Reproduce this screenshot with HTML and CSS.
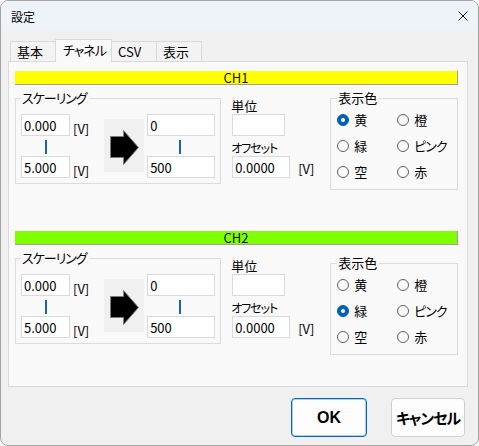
FILE: index.html
```html
<!DOCTYPE html>
<html lang="ja">
<head>
<meta charset="utf-8">
<title>設定</title>
<link rel="stylesheet" href="styles.css">
</head>
<body>
<div class="window">
  <div class="titlebar">
    <span class="title">設定</span>
    <svg class="close" width="10" height="10" viewBox="0 0 10 10"><path d="M0.5 0.5L9.5 9.5M9.5 0.5L0.5 9.5" stroke="#1a1a1a" stroke-width="1" fill="none"/></svg>
  </div>
  <div class="main">
    <div class="tabs">
      <div class="tab">基本</div>
      <div class="tab tab--active"><span class="kana">チャネル</span></div>
      <div class="tab">CSV</div>
      <div class="tab">表示</div>
    </div>
    <div class="panel">
      <section class="channel">
        <div class="ch-bar ch-bar--yellow">CH1</div>
        <div class="ch-row">
          <fieldset class="scaling">
            <legend><span class="kana">スケーリング</span></legend>
            <div class="scaling-body">
              <div class="range range--in">
                <div class="range-row"><input class="field field--in" value="0.000"><span class="unit">[V]</span></div>
                <span class="link"></span>
                <div class="range-row"><input class="field field--in" value="5.000"><span class="unit">[V]</span></div>
              </div>
              <div class="arrow-box">
                <svg width="30" height="36" viewBox="0 0 30 36"><polygon points="0.5,6.5 13.5,6.5 13.5,0.5 28.5,17.5 13.5,34.5 13.5,27.5 0.5,27.5" fill="#000" stroke="#7c7c7c" stroke-width="1"/></svg>
              </div>
              <div class="range range--out">
                <input class="field field--out" value="0">
                <span class="link"></span>
                <input class="field field--out" value="500">
              </div>
            </div>
          </fieldset>
          <div class="units">
            <span class="label label--first">単位</span>
            <input class="field field--unit" value="">
            <span class="label label--second"><span class="kana">オフセット</span></span>
            <div class="offset-row"><input class="field field--offset" value="0.0000"><span class="unit unit--offset">[V]</span></div>
          </div>
          <fieldset class="colors">
            <legend>表示色</legend>
            <div class="radio-grid">
              <div class="radio-item"><span class="radio radio--on"></span>黄</div>
              <div class="radio-item"><span class="radio"></span>橙</div>
              <div class="radio-item"><span class="radio"></span>緑</div>
              <div class="radio-item"><span class="radio"></span><span class="kana">ピンク</span></div>
              <div class="radio-item"><span class="radio"></span>空</div>
              <div class="radio-item"><span class="radio"></span>赤</div>
            </div>
          </fieldset>
        </div>
      </section>
      <section class="channel">
        <div class="ch-bar ch-bar--green">CH2</div>
        <div class="ch-row">
          <fieldset class="scaling">
            <legend><span class="kana">スケーリング</span></legend>
            <div class="scaling-body">
              <div class="range range--in">
                <div class="range-row"><input class="field field--in" value="0.000"><span class="unit">[V]</span></div>
                <span class="link"></span>
                <div class="range-row"><input class="field field--in" value="5.000"><span class="unit">[V]</span></div>
              </div>
              <div class="arrow-box">
                <svg width="30" height="36" viewBox="0 0 30 36"><polygon points="0.5,6.5 13.5,6.5 13.5,0.5 28.5,17.5 13.5,34.5 13.5,27.5 0.5,27.5" fill="#000" stroke="#7c7c7c" stroke-width="1"/></svg>
              </div>
              <div class="range range--out">
                <input class="field field--out" value="0">
                <span class="link"></span>
                <input class="field field--out" value="500">
              </div>
            </div>
          </fieldset>
          <div class="units">
            <span class="label label--first">単位</span>
            <input class="field field--unit" value="">
            <span class="label label--second"><span class="kana">オフセット</span></span>
            <div class="offset-row"><input class="field field--offset" value="0.0000"><span class="unit unit--offset">[V]</span></div>
          </div>
          <fieldset class="colors colors--low">
            <legend>表示色</legend>
            <div class="radio-grid">
              <div class="radio-item"><span class="radio"></span>黄</div>
              <div class="radio-item"><span class="radio"></span>橙</div>
              <div class="radio-item"><span class="radio radio--on"></span>緑</div>
              <div class="radio-item"><span class="radio"></span><span class="kana">ピンク</span></div>
              <div class="radio-item"><span class="radio"></span>空</div>
              <div class="radio-item"><span class="radio"></span>赤</div>
            </div>
          </fieldset>
        </div>
      </section>
    </div>
  </div>
  <div class="actions">
    <button class="btn btn--ok">OK</button>
    <button class="btn btn--cancel">キャンセル</button>
  </div>
</div>
</body>
</html>
```
FILE: styles.css
```css
html, body {
  margin: 0;
  background: #ffffff;
}
body {
  font-family: "Noto Sans CJK JP", "Noto Sans", sans-serif;
  font-size: 13px;
  color: #000;
  font-feature-settings: "palt";
}
.kana {
  font-size: 12px;
  letter-spacing: -1px;
}
.window {
  width: 479px;
  height: 446px;
  box-sizing: border-box;
  border: 1px solid #a3a3a3;
  border-radius: 8px;
  background: #f0f0f0;
  overflow: hidden;
  display: flex;
  flex-direction: column;
}
.titlebar {
  height: 30px;
  flex: none;
  background: #eef3fa;
  display: flex;
  align-items: center;
  justify-content: space-between;
  padding: 0 10px;
  font-size: 12px;
}
.close { display: block; }
.main {
  padding: 8px 10px 0 7px;
}
.tabs {
  display: flex;
  align-items: flex-end;
  height: 22px;
  padding-left: 2px;
}
.tab {
  box-sizing: border-box;
  width: 46px;
  height: 20px;
  padding-left: 6px;
  border: 1px solid #d9d9d9;
  border-bottom: none;
  background: #f3f3f3;
  display: flex;
  align-items: center;
  line-height: 14px;
}
.tab + .tab { margin-left: -1px; }
.tab--active {
  width: 57px;
  height: 23px;
  margin-bottom: -1px;
  padding-left: 7px;
  padding-bottom: 3px;
  background: #f9f9f9;
  position: relative;
  z-index: 1;
}
.tab--active .kana { font-size: 13px; }
.panel {
  box-sizing: border-box;
  width: 460px;
  height: 326px;
  border: 1px solid #d9d9d9;
  background: #f9f9f9;
  padding: 9px 9px 0 6px;
}
.channel + .channel { margin-top: 41px; }
.ch-bar {
  box-sizing: border-box;
  height: 14px;
  border-right: 1px solid #a0a0a0;
  border-bottom: 1px solid #a0a0a0;
  text-align: center;
  font-size: 13px;
  line-height: 13px;
  color: #111;
}
.ch-bar--yellow { background: #ffff00; }
.ch-bar--green { background: #80ff00; }
.ch-row {
  display: flex;
  align-items: flex-start;
  margin-top: 6px;
}
fieldset {
  margin: 0;
  min-width: 0;
  box-sizing: border-box;
  border: 1px solid #dcdcdc;
}
legend {
  padding: 0 2px 0 1px;
  font-size: 13px;
  line-height: 14px;
}
.scaling {
  width: 208px;
  padding: 9px 5px 5px 5px;
}
.scaling legend .kana { font-size: 13px; }
.scaling-body {
  display: flex;
  align-items: flex-start;
}
.range {
  display: flex;
  flex-direction: column;
  align-items: flex-start;
}
.range--in { width: 84px; }
.range--out { width: 68px; margin-left: 3px; }
.range-row {
  display: flex;
  align-items: flex-end;
  gap: 3px;
}
.link {
  display: block;
  width: 2px;
  height: 14px;
  background: #1f5fb0;
  margin: 4px 0 2px 24px;
}
.range--out .link { margin-left: 32px; }
.field {
  box-sizing: border-box;
  height: 22px;
  margin: 0;
  padding: 0 2px;
  border: 1px solid #dadada;
  background: #ffffff;
  font: inherit;
  color: #000;
  outline: none;
}
.field--in { width: 49px; }
.field--out { width: 68px; }
.field--unit { width: 53px; margin-top: 1px; margin-left: 1px; }
.field--offset { width: 58px; margin-left: 1px; }
.unit { line-height: 14px; }
.unit--offset { margin-bottom: 2px; }
.arrow-box {
  box-sizing: border-box;
  width: 40px;
  height: 53px;
  margin-top: 5px;
  background: #f0f0f0;
  padding: 11px 0 0 6px;
}
.arrow-box svg { display: block; }
.units {
  width: 100px;
  margin-left: 10px;
  display: flex;
  flex-direction: column;
  align-items: flex-start;
}
.label { line-height: 14px; }
.label--first { margin-top: 8px; }
.label--second { margin-top: 5px; margin-bottom: 1px; }
.offset-row {
  display: flex;
  align-items: flex-end;
  gap: 8px;
}
.colors {
  width: 129px;
  padding: 2px 0 4px 6px;
}
.colors--low { margin-top: 5px; }
.radio-grid {
  display: grid;
  grid-template-columns: 60px 60px;
  grid-auto-rows: 26px;
  align-items: center;
}
.radio-item {
  display: flex;
  align-items: center;
  gap: 5px;
  line-height: 14px;
}
.radio-item .kana { font-size: 13px; }
.radio {
  box-sizing: border-box;
  width: 12px;
  height: 12px;
  border-radius: 50%;
  border: 1px solid #5f5f5f;
  background: #fafafa;
  display: flex;
  align-items: center;
  justify-content: center;
  flex: none;
}
.radio--on {
  background: #005fb8;
  border-color: #005fb8;
}
.radio--on::after {
  content: "";
  width: 4px;
  height: 4px;
  border-radius: 50%;
  background: #ffffff;
}
.actions {
  display: flex;
  justify-content: flex-end;
  gap: 24px;
  padding: 11px 13px 0 0;
}
.btn {
  box-sizing: border-box;
  height: 39px;
  margin: 0;
  padding: 0;
  border: 1px solid #d0d0d0;
  border-radius: 4px;
  background: #fdfdfd;
  color: #000;
  font-family: "Noto Sans CJK JP", sans-serif;
  font-weight: bold;
  font-feature-settings: "palt";
  display: flex;
  align-items: center;
  justify-content: center;
}
.btn--ok {
  width: 76px;
  border-color: #0067c0;
  box-shadow: inset 0 0 0 1px rgba(0, 103, 192, 0.3);
  font-family: "Liberation Sans", sans-serif;
  font-size: 16px;
}
.btn--cancel {
  width: 74px;
  font-size: 15px;
  letter-spacing: -1px;
}
```
